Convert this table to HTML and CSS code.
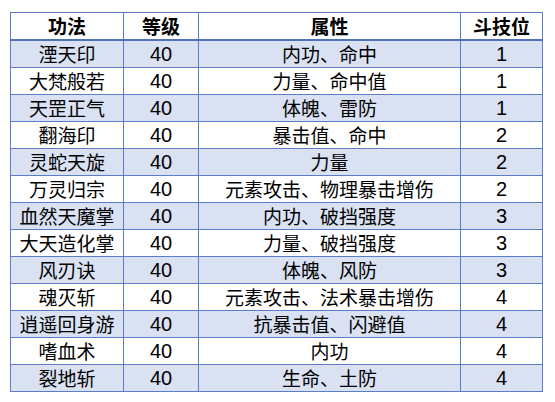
FILE: index.html
```html
<!DOCTYPE html>
<html>
<head>
<meta charset="utf-8">
<link rel="stylesheet" href="styles.css">
</head>
<body>
<table class="grid">
  <colgroup>
    <col class="c1"><col class="c2"><col class="c3"><col class="c4">
  </colgroup>
  <thead>
    <tr><th>功法</th><th>等级</th><th>属性</th><th>斗技位</th></tr>
  </thead>
  <tbody>
    <tr><td>湮天印</td><td class="num">40</td><td>内功、命中</td><td class="num">1</td></tr>
    <tr><td>大梵般若</td><td class="num">40</td><td>力量、命中值</td><td class="num">1</td></tr>
    <tr><td>天罡正气</td><td class="num">40</td><td>体魄、雷防</td><td class="num">1</td></tr>
    <tr><td>翻海印</td><td class="num">40</td><td>暴击值、命中</td><td class="num">2</td></tr>
    <tr><td>灵蛇天旋</td><td class="num">40</td><td>力量</td><td class="num">2</td></tr>
    <tr><td>万灵归宗</td><td class="num">40</td><td>元素攻击、物理暴击增伤</td><td class="num">2</td></tr>
    <tr><td>血然天魔掌</td><td class="num">40</td><td>内功、破挡强度</td><td class="num">3</td></tr>
    <tr><td>大天造化掌</td><td class="num">40</td><td>力量、破挡强度</td><td class="num">3</td></tr>
    <tr><td>风刃诀</td><td class="num">40</td><td>体魄、风防</td><td class="num">3</td></tr>
    <tr><td>魂灭斩</td><td class="num">40</td><td>元素攻击、法术暴击增伤</td><td class="num">4</td></tr>
    <tr><td>逍遥回身游</td><td class="num">40</td><td>抗暴击值、闪避值</td><td class="num">4</td></tr>
    <tr><td>嗜血术</td><td class="num">40</td><td>内功</td><td class="num">4</td></tr>
    <tr><td>裂地斩</td><td class="num">40</td><td>生命、土防</td><td class="num">4</td></tr>
  </tbody>
</table>
</body>
</html>
```

FILE: styles.css
```css
html, body {
  margin: 0;
  padding: 0;
  background: #ffffff;
}
body {
  padding: 12px 0 0 10px;
  font-family: "Noto Sans CJK SC", "Liberation Sans", sans-serif;
  color: #000000;
}
.grid {
  border-collapse: collapse;
  table-layout: fixed;
  width: 532px;
  font-size: 19px;
}
.c1 { width: 113px; }
.c2 { width: 75px; }
.c3 { width: 262px; }
.c4 { width: 82px; }
.grid th, .grid td {
  border: 1px solid #5a7dc4;
  padding: 0;
  text-align: center;
  vertical-align: middle;
  line-height: 20px;
  white-space: nowrap;
  overflow: hidden;
}
.grid th {
  height: 26px;
  font-weight: bold;
  border-bottom: 2px solid #4f72b8;
}
.grid td {
  height: 26px;
}
.grid td.num {
  font-family: "Liberation Sans", Arial, sans-serif;
  font-size: 20px;
}
.grid tbody tr:nth-child(odd) td {
  background: #d9e1f2;
}
```
